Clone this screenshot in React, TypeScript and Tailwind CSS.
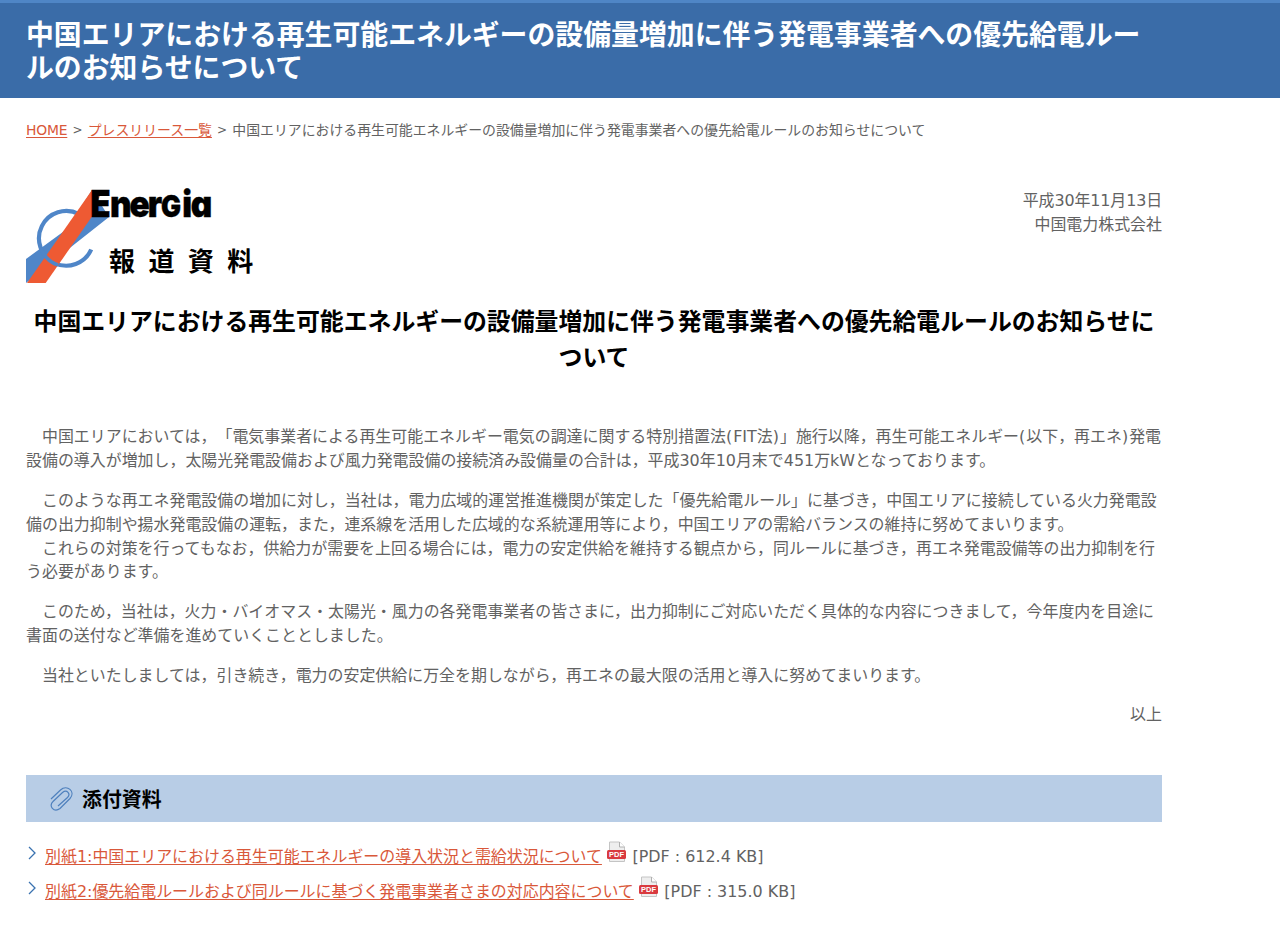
import { ReactNode } from 'react';

const title = [
  '中国エリアにおける再生可能エネルギーの設備量増加に伴う発電事業者への優先給電ルー',
  'ルのお知らせについて',
];

const paragraphs = [
  [
    '　中国エリアにおいては，「電気事業者による再生可能エネルギー電気の調達に関する特別措置法(FIT法)」施行以降，再生可能エネルギー(以下，再エネ)発電',
    '設備の導入が増加し，太陽光発電設備および風力発電設備の接続済み設備量の合計は，平成30年10月末で451万kWとなっております。',
  ],
  [
    '　このような再エネ発電設備の増加に対し，当社は，電力広域的運営推進機関が策定した「優先給電ルール」に基づき，中国エリアに接続している火力発電設',
    '備の出力抑制や揚水発電設備の運転，また，連系線を活用した広域的な系統運用等により，中国エリアの需給バランスの維持に努めてまいります。',
    '　これらの対策を行ってもなお，供給力が需要を上回る場合には，電力の安定供給を維持する観点から，同ルールに基づき，再エネ発電設備等の出力抑制を行',
    'う必要があります。',
  ],
  [
    '　このため，当社は，火力・バイオマス・太陽光・風力の各発電事業者の皆さまに，出力抑制にご対応いただく具体的な内容につきまして，今年度内を目途に',
    '書面の送付など準備を進めていくこととしました。',
  ],
  [
    '　当社といたしましては，引き続き，電力の安定供給に万全を期しながら，再エネの最大限の活用と導入に努めてまいります。',
  ],
];

const attachments = [
  {
    label: '別紙1:中国エリアにおける再生可能エネルギーの導入状況と需給状況について',
    size: '612.4 KB',
  },
  {
    label: '別紙2:優先給電ルールおよび同ルールに基づく発電事業者さまの対応内容について',
    size: '315.0 KB',
  },
];

function App() {
  return (
    <div
      lang="ja"
      className="h-[936px] overflow-hidden bg-white font-['DejaVu_Sans','Noto_Sans_CJK_JP',sans-serif] text-[15.94px] leading-[23.85px] whitespace-nowrap text-[#626262] [text-spacing-trim:space-all]"
    >
      <header className="h-[98px] border-t-[3px] border-[#4f86c6] bg-[#3a6ca8] pt-4 pl-[26px]">
        <h1 className="text-[27.87px] leading-[33.4px] font-bold text-white">
          {title.map((line) => (
            <span key={line} className="block">
              {line}
            </span>
          ))}
        </h1>
      </header>
      <main className="ml-[26px] w-[1136px]">
        <nav className="flex h-[90px] gap-[5.2px] pt-[22px] text-[13.88px] leading-5">
          <Link>
            <span className="tracking-[-0.2px]">HOME</span>
          </Link>
          <span className="text-[12px]">&gt;</span>
          <Link>プレスリリース一覧</Link>
          <span className="text-[12px]">&gt;</span>
          <span>{title.join('')}</span>
        </nav>
        <div className="flex h-[117px] justify-between">
          <Logo />
          <div className="pt-px text-right">
            <p className="tracking-[-0.12px]">平成30年11月13日</p>
            <p>中国電力株式会社</p>
          </div>
        </div>
        <h2 className="text-center text-[23.87px] leading-[35.8px] font-bold text-black">
          <span className="block">{title[0] + 'ルのお知らせに'}</span>
          <span className="block">ついて</span>
        </h2>
        <article className="flex flex-col gap-[15.9px] pt-[48.700px]">
          {paragraphs.map((lines, i) => (
            <p key={i}>
              {lines.map((line) => (
                <span key={line} className="block">
                  <Line text={line} />
                </span>
              ))}
            </p>
          ))}
          <p className="text-right">以上</p>
        </article>
        <section className="pt-[48px]">
          <h3 className="flex h-[47px] items-center gap-[7px] bg-[#b8cde6] pt-px pl-6 text-[19.9px] font-bold text-black">
            <ClipIcon />
            <span className="pt-[3px]">添付資料</span>
          </h3>
          <ul className="flex flex-col gap-[11px] pt-[23px]">
            {attachments.map(({ label, size }) => (
              <li key={label} className="flex">
                <ArrowIcon />
                <Link>{label}</Link>
                <PdfIcon />
                <span>[PDF : {size}]</span>
              </li>
            ))}
          </ul>
        </section>
      </main>
    </div>
  );
}

// half-width parentheses get a little extra room
const Line = ({ text }: { text: string }) => {
  return text.split(/([()])/).map((part, i) =>
    part === '(' || part === ')' ? (
      <span key={i} className="tracking-[1px]">
        {part}
      </span>
    ) : (
      part
    ),
  );
};

const Link = ({ children }: { children: ReactNode }) => {
  return (
    <a
      href="#"
      className="text-[#d9583a] underline decoration-1 underline-offset-2"
    >
      {children}
    </a>
  );
};

const Logo = () => {
  return (
    <svg width="260" height="96" viewBox="0 0 260 96" overflow="visible">
      <path d="M0 71 41 41 66 2 83 29 44.700 59.300 0 95Z" fill="#4f86c8" />
      <path
        d="M53 26.200A27.300 27.300 0 1 0 65.200 61.500"
        fill="none"
        stroke="#4f86c8"
        strokeWidth="4.200"
      />
      <path d="M66 2H76L66 28.500 19.700 95H1Z" fill="#ee5a33" />
      <path
        d="M15 60A27.300 27.300 0 0 0 32 77"
        fill="none"
        stroke="#4f86c8"
        strokeWidth="3.700"
      />
      <text
        x="71.5 93.3 115 135.2 150 173.5 183.2"
        y="29.300"
        transform="scale(.9 1)"
        strokeWidth="0.4"
        className="fill-black stroke-black font-['Inter',sans-serif] text-[37px] font-black [font-feature-settings:'cv11']"
      >
        Ener<tspan className="text-[29.5px]">G</tspan>ia
      </text>
      <text
        x="83"
        y="82.500"
        className="fill-black font-['Noto_Sans_CJK_JP',sans-serif] text-[26px] font-bold tracking-[13.4px]"
      >
        報道資料
      </text>
    </svg>
  );
};

const ClipIcon = () => {
  return (
    <svg
      width="25"
      height="26"
      viewBox="0 0 25 26"
      fill="none"
      stroke="#4f80bd"
      strokeWidth="1.2"
    >
      <path d="M1 13 10.500 4C17-2 26 5.500 20 12.500L10 22.500C4 27-2 20 3 15.500L12.500 6.500C17 3 21 8 17.500 11.500L8 20" />
    </svg>
  );
};

const ArrowIcon = () => {
  return (
    <svg
      width="19"
      height="14"
      viewBox="0 0 19 14"
      fill="none"
      stroke="#3a72b0"
      strokeWidth="1.300"
      className="mt-px"
    >
      <path d="M3 1 9 7 3 13" />
    </svg>
  );
};

const PdfIcon = () => {
  return (
    <svg
      width="21"
      height="22"
      viewBox="0 0 21 22"
      className="mt-[-4px] mr-[5px] ml-[4.500px]"
    >
      <path d="M3.500 1H13.500L18.500 6V20.500H3.500Z" fill="#eee" stroke="#c4c4c4" />
      <path d="M13.500 1V6H18.500" fill="#fff" stroke="#b0b0b0" />
      <rect x="1" y="9" width="19" height="9" rx="1.500" fill="#d93a3f" />
      <text
        x="3"
        y="16.200"
        textLength="15"
        lengthAdjust="spacingAndGlyphs"
        className="fill-white font-['Liberation_Sans',sans-serif] text-[7.5px] font-bold"
      >
        PDF
      </text>
    </svg>
  );
};

export default App;
